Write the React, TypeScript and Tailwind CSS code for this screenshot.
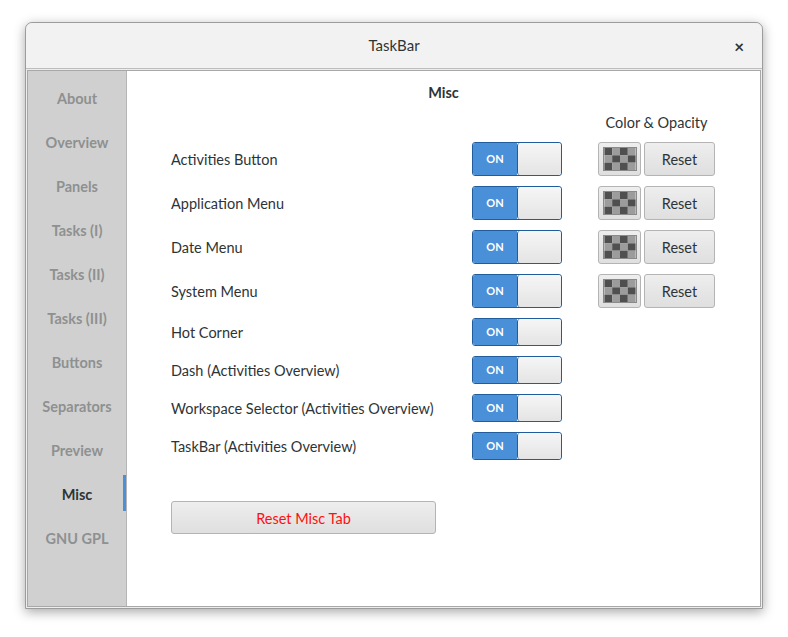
import React from "react"

const tabs = [
  "About",
  "Overview",
  "Panels",
  "Tasks (I)",
  "Tasks (II)",
  "Tasks (III)",
  "Buttons",
  "Separators",
  "Preview",
  "Misc",
  "GNU GPL",
]

const rows = [
  { label: "Activities Button", color: true },
  { label: "Application Menu", color: true },
  { label: "Date Menu", color: true },
  { label: "System Menu", color: true },
  { label: "Hot Corner", color: false },
  { label: "Dash (Activities Overview)", color: false },
  { label: "Workspace Selector (Activities Overview)", color: false },
  { label: "TaskBar (Activities Overview)", color: false },
]

function Switch({ tall }: { tall: boolean }) {
  return (
    <div
      className={`flex w-[90px] ${tall ? "h-[34px]" : "h-[28px]"} rounded-[3px] border border-[#215d9c] overflow-hidden`}
    >
      <div className="flex w-[44px] items-center justify-center bg-[#4a90d9] text-[11px] font-bold text-white">
        ON
      </div>
      <div className="flex-1 rounded-[3px] border-l border-[#215d9c] bg-gradient-to-b from-[#f6f6f6] to-[#e4e4e4]" />
    </div>
  )
}

function Checker() {
  const cells = []
  for (let r = 0; r < 3; r++) {
    for (let c = 0; c < 4; c++) {
      cells.push(
        <rect
          key={`${r}-${c}`}
          x={c * 8.5}
          y={r * 8}
          width={8.5}
          height={8}
          fill={(r + c) % 2 === 0 ? "#4f4f4f" : "#9c9c9c"}
        />
      )
    }
  }
  return (
    <svg width="34" height="24" viewBox="0 0 34 24" className="border border-[#8a8a8a]">
      {cells}
    </svg>
  )
}

function GtkButton({ className, children }: { className?: string; children: React.ReactNode }) {
  return (
    <div
      className={`flex items-center justify-center rounded-[3px] border border-[#b4b4b4] bg-gradient-to-b from-[#eeeeee] to-[#dfdfdf] ${className ?? ""}`}
    >
      {children}
    </div>
  )
}

export default function App() {
  return (
    <div
      className="w-[788px] h-[637px] bg-white pt-[22px] pl-[25px]"
      style={{ fontFamily: "Lato, 'Noto Sans', sans-serif" }}
    >
      <div className="w-[738px] h-[587px] flex flex-col rounded-t-[7px] border border-[#9c9c9c] bg-[#ededed] shadow-[0_3px_12px_rgba(0,0,0,0.35)]">
        <div className="relative flex h-[46px] shrink-0 items-center justify-center rounded-t-[7px] border-b border-[#bdbdbd] bg-[#f2f2f2]">
          <span className="text-[15px] text-[#2e3436]">TaskBar</span>
          <span className="absolute right-[18px] top-[11px] text-[17px] font-bold text-[#2e3436]">×</span>
        </div>
        <div className="flex flex-1 p-px">
          <div className="flex flex-1 border border-[#a8a8a8]">
            <div className="flex w-[99px] flex-col gap-2 border-r border-[#b5b5b5] bg-[#d0d0d0] pt-2">
              {tabs.map((t) => (
                <div
                  key={t}
                  className={`flex h-9 items-center justify-center pt-[4px] text-[14.5px] leading-5 font-bold ${
                    t === "Misc"
                      ? "border-r-[3px] border-[#4a90d9] pl-[3px] text-[#2e3436]"
                      : "text-[#8e9091]"
                  }`}
                >
                  {t}
                </div>
              ))}
            </div>
            <div className="flex flex-1 flex-col bg-white pt-[10px] text-[#2e3436]">
              <div className="h-5 pt-[2px] text-center text-[14.5px] leading-5 font-bold">Misc</div>
              <div className="mt-[11px] flex pl-[471px]">
                <div className="flex h-5 w-[117px] items-center justify-center pt-[1px] text-[14.5px] leading-5">
                  Color &amp; Opacity
                </div>
              </div>
              <div className="mt-[10px] flex flex-col gap-[10px] pl-[44px]">
                {rows.map((r) => (
                  <div key={r.label} className="flex items-center">
                    <div className="w-[301px] pt-[2px] text-[14.5px] leading-5">{r.label}</div>
                    <Switch tall={r.color} />
                    {r.color && (
                      <div className="ml-[36px] flex gap-[3px]">
                        <GtkButton className="h-[34px] w-[43px]">
                          <Checker />
                        </GtkButton>
                        <GtkButton className="h-[34px] w-[71px] pt-[2px] text-[14.5px] leading-5">Reset</GtkButton>
                      </div>
                    )}
                  </div>
                ))}
              </div>
              <div className="mt-[41px] pl-[44px]">
                <GtkButton className="h-[33px] w-[265px] pt-[2px] text-[14.5px] leading-5 text-[#ff1010]">
                  Reset Misc Tab
                </GtkButton>
              </div>
            </div>
          </div>
        </div>
      </div>
    </div>
  )
}
